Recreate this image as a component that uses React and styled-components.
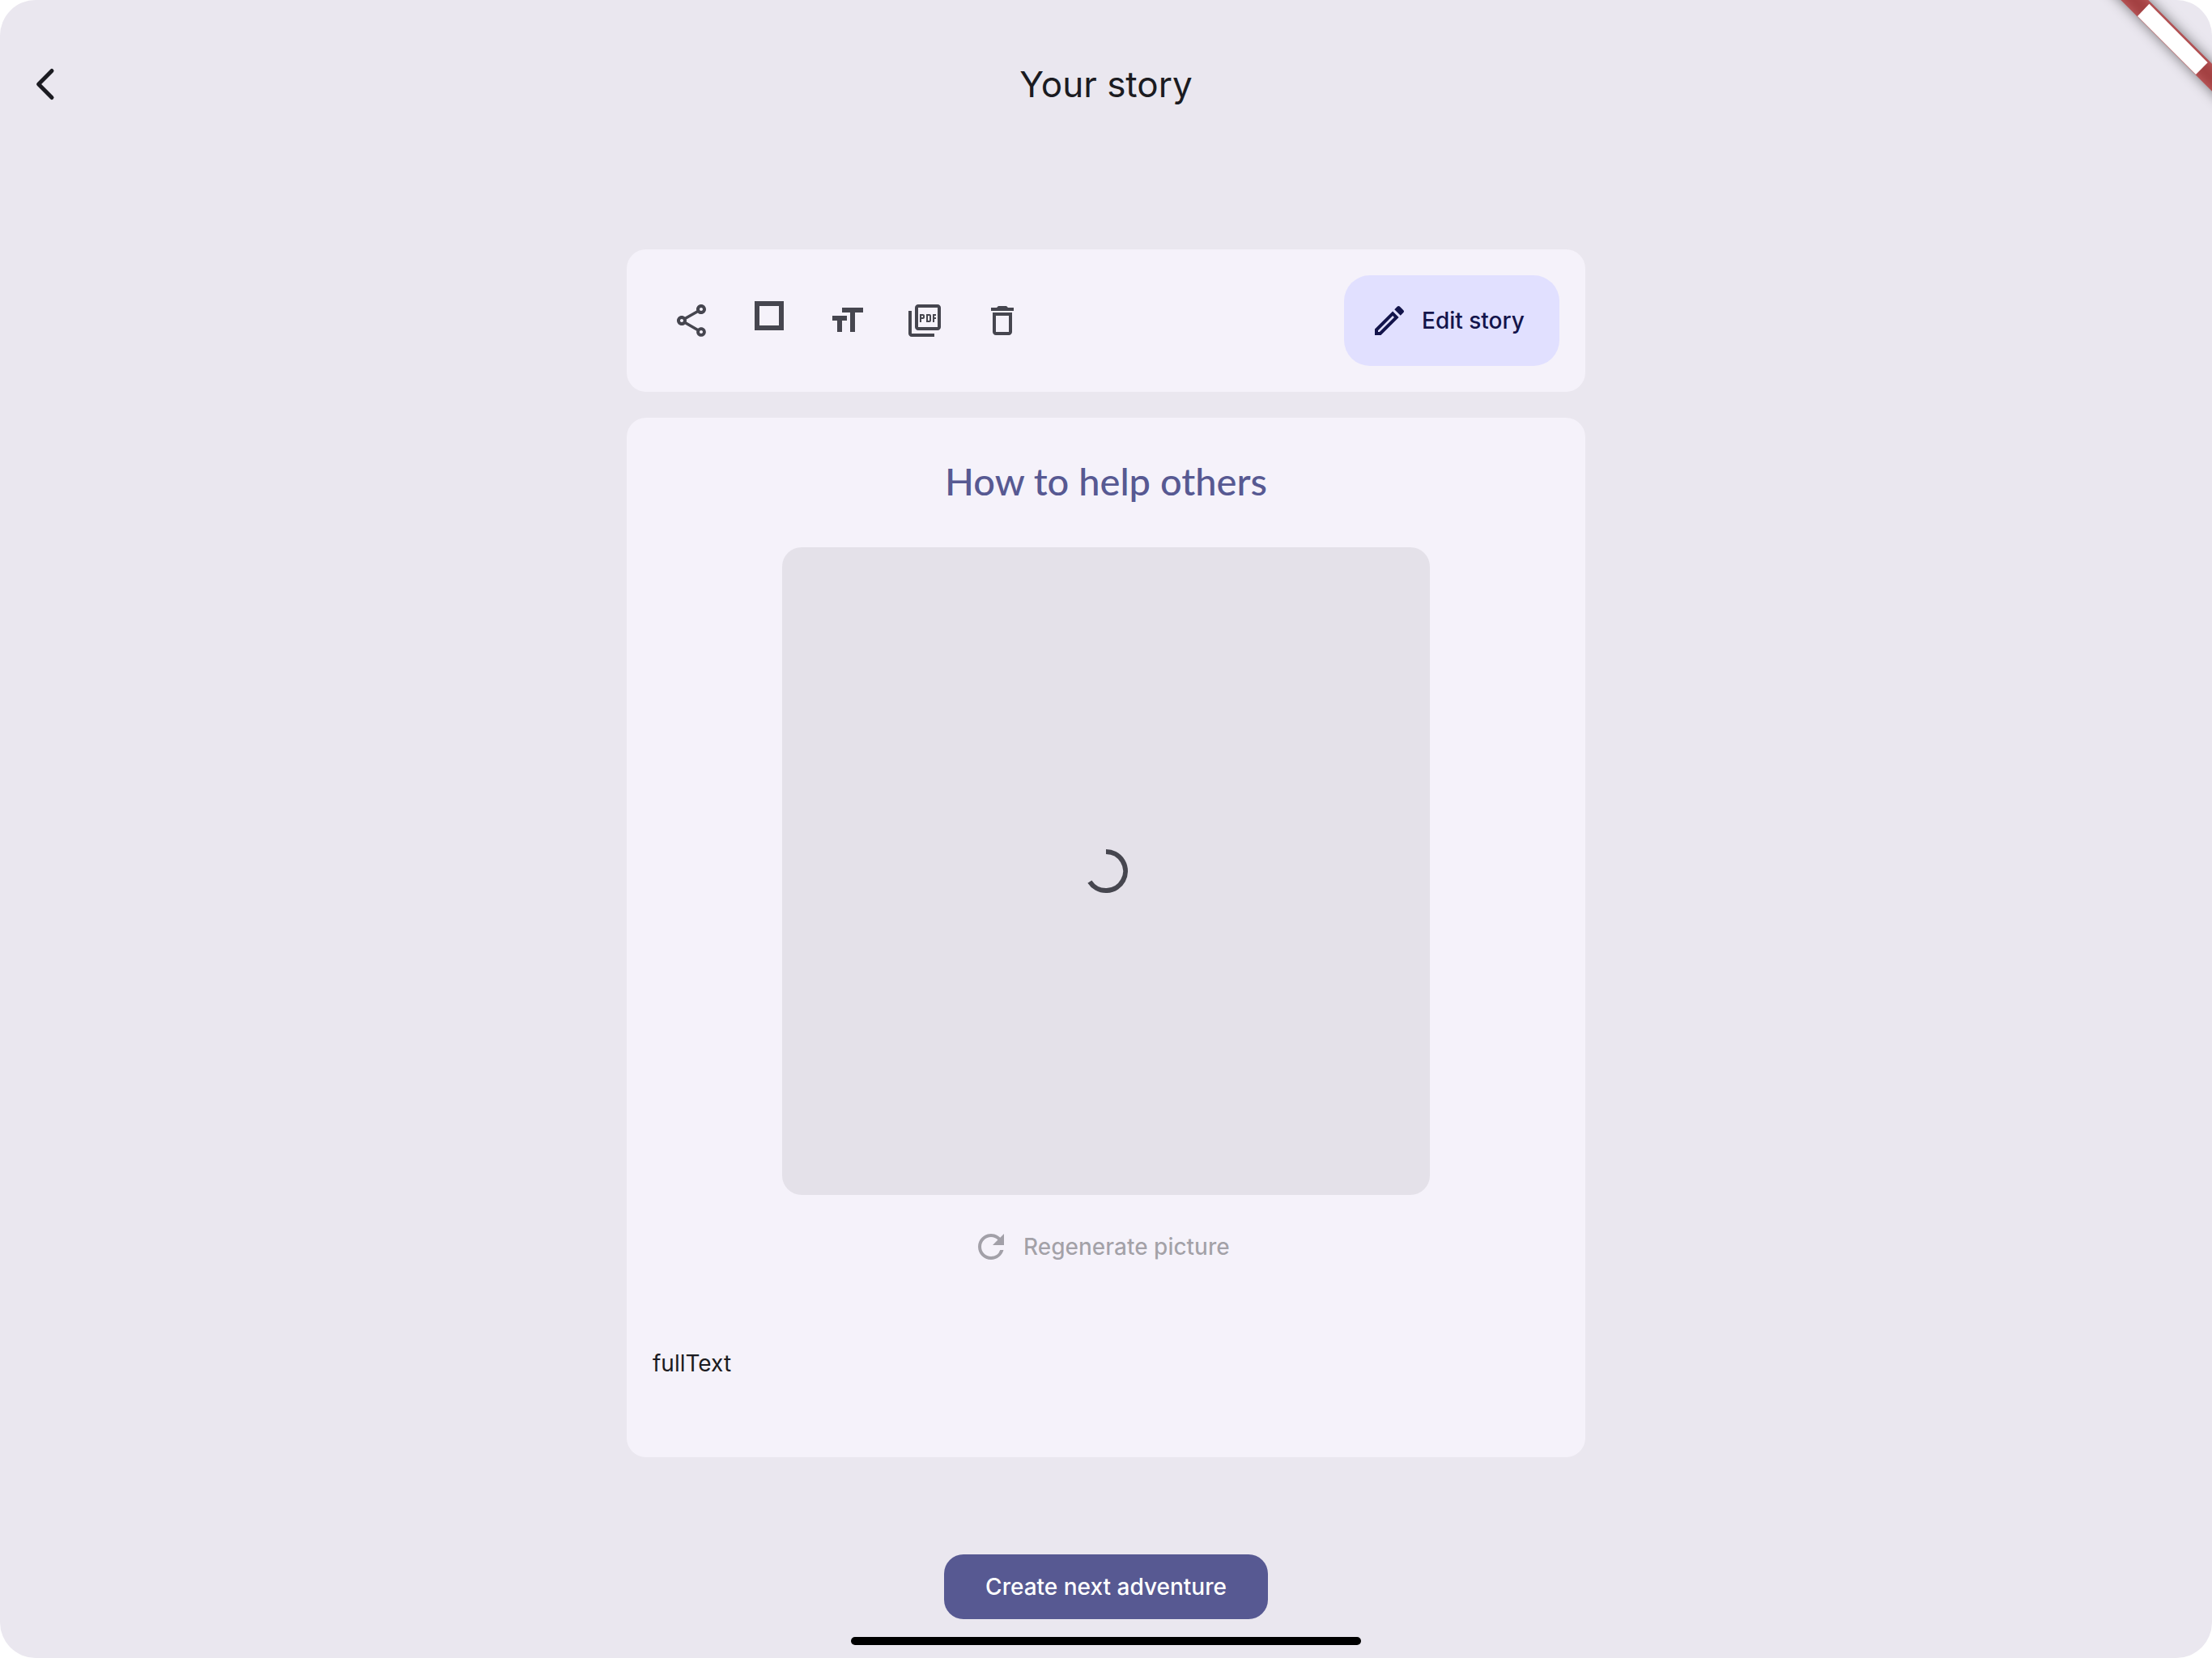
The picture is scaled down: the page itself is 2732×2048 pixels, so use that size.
import React from "react";
import styled, { createGlobalStyle } from "styled-components";
import {
  MdOutlineShare,
  MdFormatSize,
  MdOutlinePictureAsPdf,
  MdDeleteOutline,
  MdOutlineEdit,
  MdRefresh,
} from "react-icons/md";

const color = {
  page: "#eae7ef",
  card: "#f5f2fa",
  placeholder: "#e4e1e9",
  ink: "#1b1b21",
  icon: "#46464f",
  primary: "#575992",
  tonal: "#e1e0ff",
  onTonal: "#13144b",
  disabled: "rgba(27, 27, 33, 0.38)",
};

const GlobalStyle = createGlobalStyle`
  *, *::before, *::after { box-sizing: border-box; }
  body {
    margin: 0;
    background: #ffffff;
    color: ${color.ink};
    font-family: Inter, "Liberation Sans", sans-serif;
    font-size: 28px;
    line-height: 40px;
  }
  button { font: inherit; border: 0; margin: 0; padding: 0; background: none; cursor: pointer; }
`;

const Screen = styled.div`
  position: relative;
  display: flex;
  flex-direction: column;
  align-items: center;
  min-height: 100vh;
  overflow: hidden;
  border-radius: 44px;
  background: ${color.page};
`;

const Header = styled.header`
  display: grid;
  grid-template-columns: 112px 1fr 112px;
  align-items: center;
  width: 100%;
  height: 208px;
`;

const PageTitle = styled.h1`
  margin: 0;
  text-align: center;
  font-size: 44px;
  line-height: 56px;
  font-weight: 400;
`;

const IconButton = styled.button`
  display: flex;
  align-items: center;
  justify-content: center;
  width: ${(p) => p.$width || 96}px;
  height: 96px;
  color: ${(p) => p.$color || color.icon};

  svg { display: block; }
`;

const Content = styled.main`
  display: flex;
  flex-direction: column;
  gap: 32px;
  width: 100%;
  max-width: 1184px;
  padding: 100px 0 120px;
`;

const Card = styled.section`
  display: flex;
  flex-direction: ${(p) => (p.$row ? "row" : "column")};
  align-items: center;
  justify-content: ${(p) => (p.$row ? "space-between" : "flex-start")};
  padding: ${(p) => (p.$row ? "32px" : "48px 32px 96px")};
  border-radius: 24px;
  background: ${color.card};
`;

const Tools = styled.div`
  display: flex;
`;

const LabelButton = styled.button`
  display: flex;
  align-items: center;
  gap: 16px;
  font-weight: 500;
`;

const TonalButton = styled(LabelButton)`
  min-width: 266px;
  height: 112px;
  padding: 0 32px;
  border-radius: 32px;
  background: ${color.tonal};
  color: ${color.onTonal};
`;

const TextButton = styled(LabelButton)`
  min-width: 380px;
  height: 96px;
  margin-top: 16px;
  padding: 0 24px;

  &:disabled { color: ${color.disabled}; cursor: default; }
`;

const FilledButton = styled(LabelButton)`
  justify-content: center;
  width: 400px;
  height: 80px;
  border-radius: 24px;
  background: ${color.primary};
  color: #ffffff;
`;

const StoryTitle = styled.h2`
  margin: 0 0 52px;
  color: ${color.primary};
  font-family: Lato, "Open Sans", sans-serif;
  font-size: 47px;
  line-height: 60px;
  font-weight: 500;
`;

const Picture = styled.div`
  display: flex;
  align-items: center;
  justify-content: center;
  width: 100%;
  max-width: 800px;
  aspect-ratio: 1;
  border-radius: 24px;
  background: ${color.placeholder};
`;

const StoryText = styled.p`
  align-self: stretch;
  margin: 76px 0 0;
`;

const Footer = styled.footer`
  display: flex;
  flex-direction: column;
  align-items: center;
  gap: 22px;
  width: 100%;
  margin-top: auto;
  padding-bottom: 16px;
`;

const HomeIndicator = styled.div`
  width: 630px;
  max-width: 60%;
  height: 10px;
  border-radius: 5px;
  background: #000000;
`;

const Ribbon = styled.svg`
  position: absolute;
  top: 0;
  right: 0;
  pointer-events: none;
`;

function BackIcon() {
  return (
    <svg width="48" height="48" viewBox="0 0 48 48" fill="none" stroke="currentColor" strokeWidth="5" strokeLinecap="round" strokeLinejoin="round">
      <path d="M32 7.500 15.600 24 32 40.500" />
    </svg>
  );
}

function SquareIcon() {
  return (
    <svg width="48" height="48" viewBox="0 0 48 48" fill="none" stroke="currentColor" strokeWidth="6">
      <path d="M9 3h30v30H9z" />
    </svg>
  );
}

function Spinner() {
  return (
    <svg role="progressbar" aria-label="Loading picture" width="72" height="72" viewBox="-36 -36 72 72" fill="none" stroke={color.icon} strokeWidth="6">
      <path d="M0-24A24 24 0 1 1-20.130 13.070" />
    </svg>
  );
}

function CornerRibbon() {
  return (
    <Ribbon width="160" height="160" viewBox="0 0 160 160" aria-hidden="true">
      <defs>
        <filter id="ribbon-shadow" x="-50%" y="-50%" width="200%" height="200%">
          <feGaussianBlur stdDeviation="8" />
        </filter>
      </defs>
      <path d="M17.300-30 51.300-30 190 108.700 190 142.700z" fill="#000" fillOpacity="0.5" filter="url(#ribbon-shadow)" />
      <path d="M17.300-30 51.300-30 190 108.700 190 142.700z" fill="#b71c1c" fillOpacity="0.630" />
      <path d="M68 20 82.500 4.700 154.700 77.300 140 92z" fill="#fff" />
    </Ribbon>
  );
}

const tools = [
  { label: "Share", icon: <MdOutlineShare size={48} /> },
  { label: "Background", icon: <SquareIcon /> },
  { label: "Text size", icon: <MdFormatSize size={48} /> },
  { label: "Save as PDF", icon: <MdOutlinePictureAsPdf size={48} /> },
  { label: "Delete", icon: <MdDeleteOutline size={48} /> },
];

export default function App() {
  return (
    <>
      <GlobalStyle />
      <Screen>
        <Header>
          <IconButton $width={112} $color={color.ink} aria-label="Back">
            <BackIcon />
          </IconButton>
          <PageTitle>Your story</PageTitle>
        </Header>
        <Content>
          <Card $row>
            <Tools>
              {tools.map((tool) => (
                <IconButton key={tool.label} aria-label={tool.label}>
                  {tool.icon}
                </IconButton>
              ))}
            </Tools>
            <TonalButton>
              <MdOutlineEdit size={48} />
              Edit story
            </TonalButton>
          </Card>
          <Card>
            <StoryTitle>How to help others</StoryTitle>
            <Picture>
              <Spinner />
            </Picture>
            <TextButton disabled>
              <MdRefresh size={48} />
              Regenerate picture
            </TextButton>
            <StoryText>fullText</StoryText>
          </Card>
        </Content>
        <Footer>
          <FilledButton>Create next adventure</FilledButton>
          <HomeIndicator />
        </Footer>
        <CornerRibbon />
      </Screen>
    </>
  );
}
